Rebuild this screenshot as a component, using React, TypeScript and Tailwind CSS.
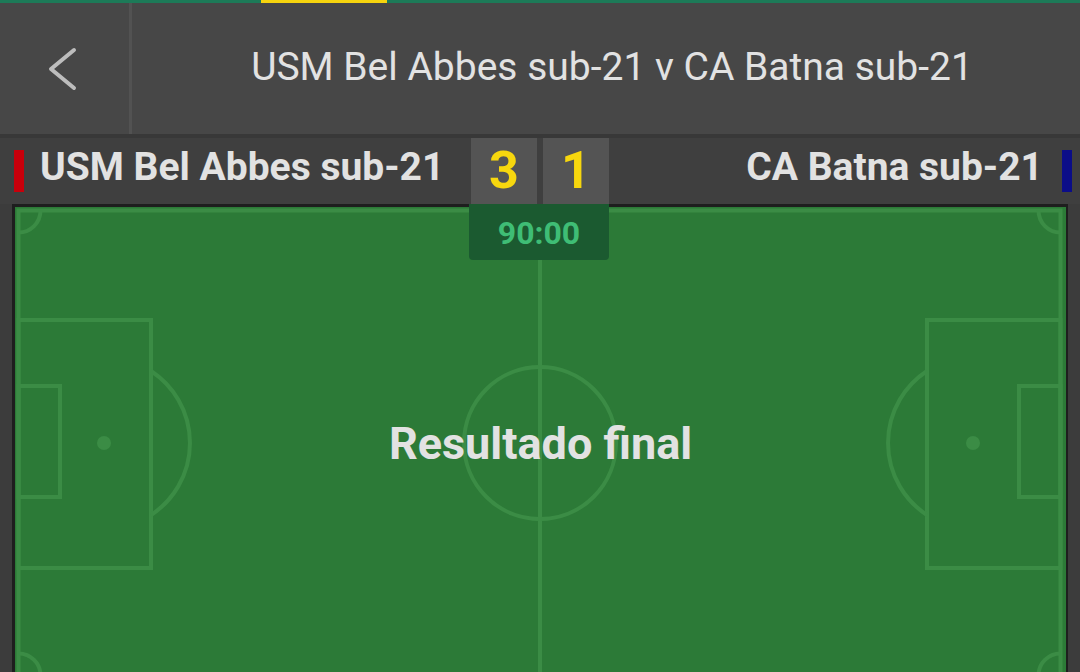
export default function App() {
  const line = "#3b8c45";
  return (
    <div className="w-[1080px] h-[672px] overflow-hidden bg-[#3c3c3c] flex flex-col" style={{ fontFamily: "Roboto, 'Noto Sans', sans-serif" }}>
      {/* top accent */}
      <div className="h-[3px] bg-[#1d7a58] flex shrink-0">
        <div className="ml-[261px] w-[126px] bg-[#f6d40e]" />
      </div>

      {/* header */}
      <header className="h-[131px] bg-[#474747] flex shrink-0">
        <button className="w-[132px] border-r-[3px] border-[#525252] flex items-center justify-center pr-[3px]">
          <svg width="32" height="44" viewBox="0 0 32 44" fill="none">
            <polyline points="27,3 4,22 27,41" stroke="#bdbdbd" strokeWidth="4" strokeLinecap="round" strokeLinejoin="round" />
          </svg>
        </button>
        <h1 className="flex-1 flex items-center justify-center text-[39px] text-[#e2e2e2] font-normal pl-[12px] pb-[2px]">
          USM Bel Abbes sub-21 v CA Batna sub-21
        </h1>
      </header>
      <div className="h-[4px] bg-[#383838] shrink-0" />

      {/* score row */}
      <div className="relative h-[66px] bg-[#3f3f3f] flex items-stretch shrink-0">
        <div className="w-[471px] shrink-0 flex items-center pl-[14px]">
          <span className="w-[10px] h-[42px] bg-[#c8000b]" />
          <span className="ml-[16px] pb-[7px] text-[39px] font-bold text-[#e2e2e2] leading-none">USM Bel Abbes sub-21</span>
        </div>
        <div className="flex gap-[6px]">
          <div className="w-[66px] bg-[#545454] flex items-center justify-center text-[52px] font-bold text-[#f7d70e] leading-none">3</div>
          <div className="w-[66px] bg-[#545454] flex items-center justify-center text-[52px] font-bold text-[#f7d70e] leading-none">1</div>
        </div>
        <div className="flex-1 min-w-0 flex items-center justify-end pr-[8px]">
          <span className="mr-[19px] pb-[7px] text-[39px] font-bold text-[#e2e2e2] leading-none">CA Batna sub-21</span>
          <span className="w-[10px] h-[42px] bg-[#0b0d88]" />
        </div>
        <div className="absolute left-[469px] top-[66px] w-[140px] h-[56px] bg-[#1b5a30] rounded-b-[4px] z-10 flex items-center justify-center pt-[2px] text-[32px] font-bold text-[#3fbd75]">
          90:00
        </div>
      </div>

      {/* pitch */}
      <div className="flex-1 px-[12px]">
        <div className="relative h-[490px] bg-[#2c7a37] border-[3px] border-[#1e1e1e] border-b-0 border-r-[2px]">
          <svg className="absolute inset-0" width="1050" height="490" viewBox="0 0 1050 490" fill="none" stroke={line} strokeWidth="4">
            <rect x="3.5" y="3.5" width="1042" height="465" />
            <line x1="525" y1="3.5" x2="525" y2="468.5" />
            <circle cx="525" cy="236" r="76" />
            {/* left */}
            <rect x="3.5" y="113" width="132.5" height="248" />
            <rect x="3.5" y="179" width="41.5" height="111" />
            <circle cx="89" cy="236" r="7" fill={line} stroke="none" />
            <path d="M136 164 A86 86 0 0 1 136 308" />
            {/* right */}
            <rect x="912" y="113" width="133.5" height="248" />
            <rect x="1004" y="179" width="41.5" height="111" />
            <circle cx="958" cy="236" r="7" fill={line} stroke="none" />
            <path d="M912 164 A86 86 0 0 0 912 308" />
            {/* corners */}
            <path d="M3.5 25.5 A22 22 0 0 0 25.5 3.5" />
            <path d="M1023.5 3.5 A22 22 0 0 0 1045.5 25.5" />
            <path d="M3.5 446.5 A22 22 0 0 1 25.5 468.5" />
            <path d="M1023.5 468.5 A22 22 0 0 1 1045.5 446.5" />
          </svg>
          <div className="absolute left-0 right-0 top-[214px] text-center text-[45px] leading-none font-bold text-[#e2e2e2]">
            Resultado final
          </div>
        </div>
      </div>
    </div>
  );
}
